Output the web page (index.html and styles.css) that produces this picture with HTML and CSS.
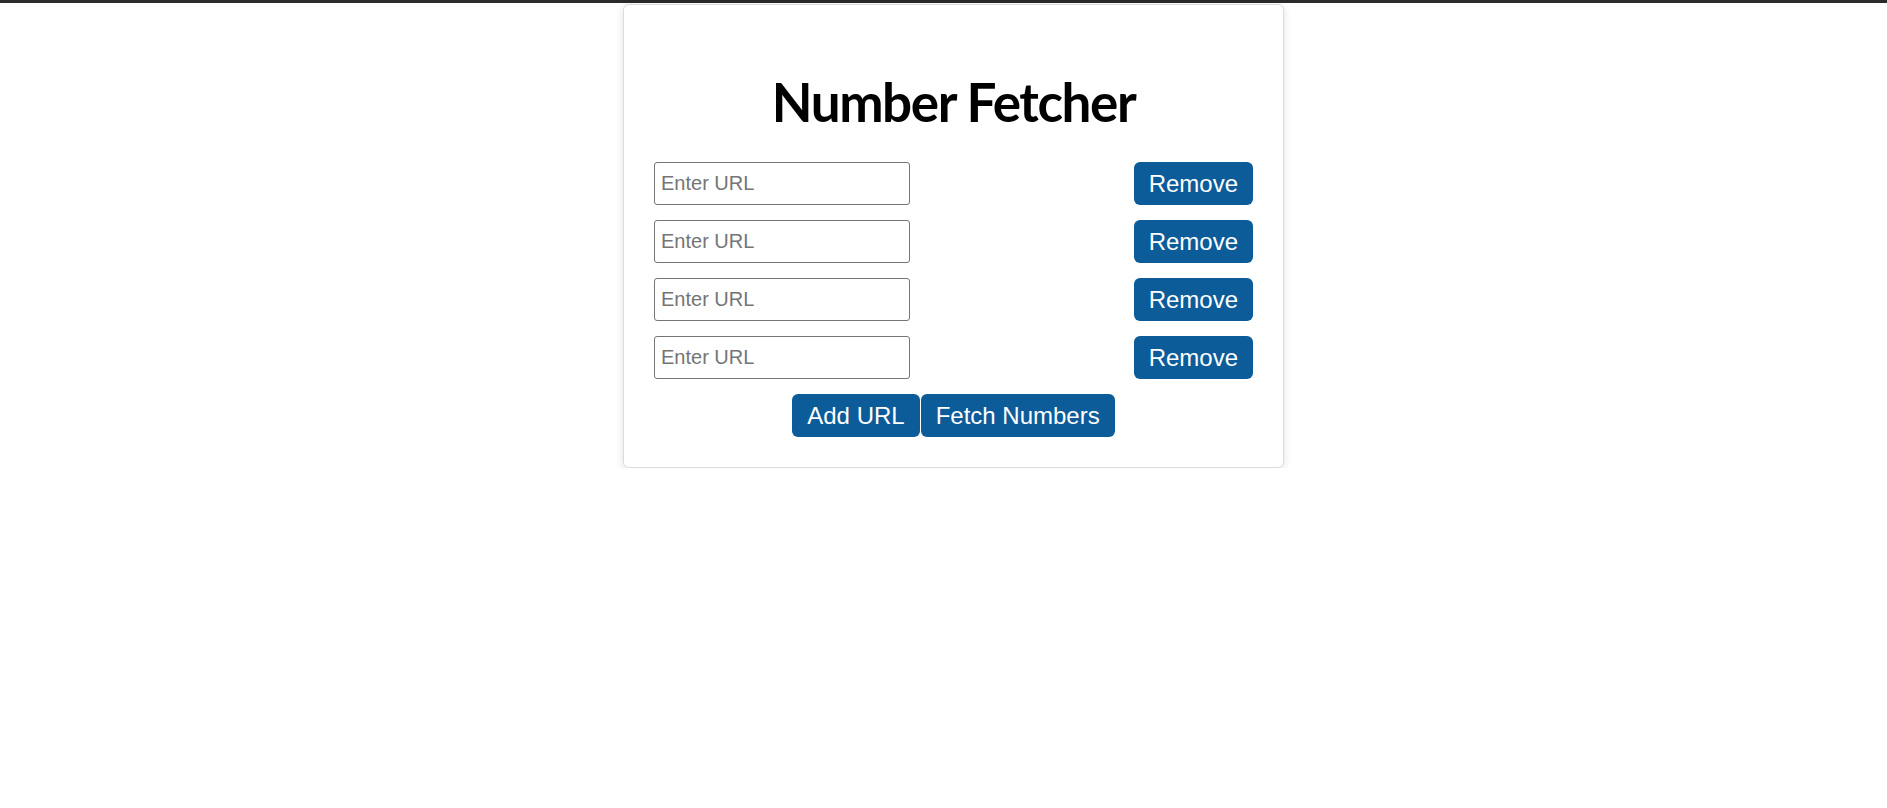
FILE: index.html
```html
<!DOCTYPE html>
<html lang="en">
<head>
<meta charset="utf-8">
<title>Number Fetcher</title>
<link rel="stylesheet" href="styles.css">
</head>
<body>
<div class="topbar"></div>
<div class="page">
  <div class="card">
    <h1 class="title">Number Fetcher</h1>
    <div class="list">
      <div class="row">
        <input class="url" type="text" placeholder="Enter URL">
        <button class="btn">Remove</button>
      </div>
      <div class="row">
        <input class="url" type="text" placeholder="Enter URL">
        <button class="btn">Remove</button>
      </div>
      <div class="row">
        <input class="url" type="text" placeholder="Enter URL">
        <button class="btn">Remove</button>
      </div>
      <div class="row">
        <input class="url" type="text" placeholder="Enter URL">
        <button class="btn">Remove</button>
      </div>
      <div class="actions">
        <button class="btn">Add URL</button>
        <button class="btn">Fetch Numbers</button>
      </div>
    </div>
  </div>
</div>
</body>
</html>
```
FILE: styles.css
```css
html, body {
  margin: 0;
  padding: 0;
  background: #ffffff;
}
body {
  font-family: "Liberation Sans", Arial, sans-serif;
}
.topbar {
  height: 3px;
  background: #2b2b2b;
}
.page {
  display: flex;
  justify-content: center;
  padding-left: 20px;
  padding-top: 1px;
}
.card {
  width: 599px;
  padding: 65px 30px 30px;
  border: 1px solid #dcdcdc;
  border-radius: 6px;
  box-shadow: 0 2px 8px rgba(0, 0, 0, 0.12);
  background: #fff;
}
.title {
  margin: 0 0 28px;
  font-family: Lato, "Noto Sans", sans-serif;
  font-weight: 700;
  font-size: 53px;
  line-height: 64px;
  letter-spacing: -1.4px;
  text-align: center;
  color: #000;
}
.list {
  display: flex;
  flex-direction: column;
  gap: 15px;
}
.row {
  display: flex;
  justify-content: space-between;
  align-items: center;
}
.url {
  box-sizing: border-box;
  width: 256px;
  height: 43px;
  padding: 0 6px;
  border: 1px solid #767676;
  border-radius: 3px;
  font-family: "Liberation Sans", Arial, sans-serif;
  font-size: 20px;
  color: #000;
  background: #fff;
}
.url::placeholder {
  color: #757575;
}
.btn {
  box-sizing: border-box;
  height: 43px;
  padding: 0 15px;
  border: none;
  border-radius: 6px;
  background: #0b5c99;
  color: #fff;
  font-family: "Liberation Sans", Arial, sans-serif;
  font-size: 24px;
  cursor: pointer;
}
.actions {
  display: flex;
  justify-content: center;
  gap: 1px;
}
```
